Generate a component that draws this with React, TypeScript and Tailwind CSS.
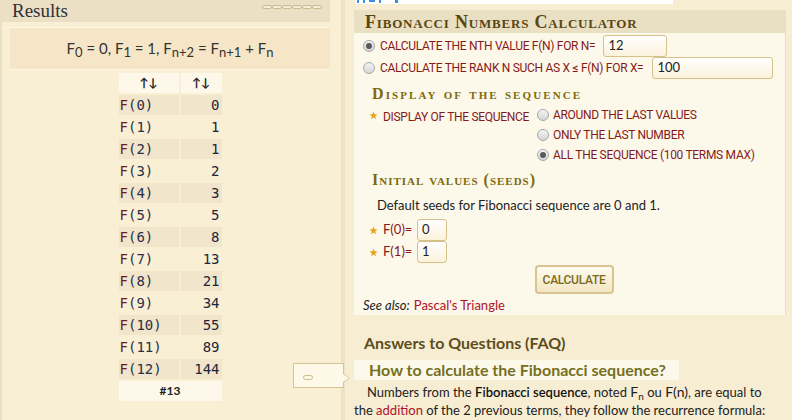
import React from "react";

const sans = { fontFamily: "Lato, 'DejaVu Sans', sans-serif" };
const caps = { fontFamily: "Roboto, 'DejaVu Sans', sans-serif", letterSpacing: "-0.3px" };
const serifCaps = { fontFamily: "'Liberation Serif', serif", fontVariant: "small-caps" as const };

function Radio({ checked }: { checked?: boolean }) {
  return (
    <span className="inline-flex w-[12px] h-[12px] rounded-full border border-[#a8a8a8] bg-gradient-to-b from-[#f4f4f4] to-[#d6d6d6] items-center justify-center shrink-0">
      {checked && <span className="w-[6px] h-[6px] rounded-full bg-[#5a5a5a]" />}
    </span>
  );
}

function Star() {
  return (
    <svg width="9" height="9" viewBox="0 0 10 10" className="shrink-0">
      <path d="M5 0.5 L6.2 3.7 L9.6 3.8 L6.9 5.9 L7.9 9.3 L5 7.3 L2.1 9.3 L3.1 5.9 L0.4 3.8 L3.8 3.7 Z" fill="#e8a317" />
    </svg>
  );
}

function Input({ value, w }: { value: string; w: string }) {
  return (
    <div className={`${w} h-[22px] rounded-[3px] border border-[#d6c08c] bg-gradient-to-b from-[#ffffff] to-[#fbf2db] flex items-center pl-[4px] text-[13px] text-[#222]`} style={sans}>
      {value}
    </div>
  );
}

const rows = [0, 1, 1, 2, 3, 5, 8, 13, 21, 34, 55, 89, 144];

export default function App() {
  return (
    <div className="relative w-[792px] h-[420px] overflow-hidden flex bg-[#f8efd5] text-[#333]">
      {/* left column */}
      <div className="w-[341px] shrink-0 flex">
        <div className="w-[2px] bg-[#ebdfc0]" />
        <div className="w-[328px] flex flex-col">
          <div className="h-[22px] bg-[#ebe0c4] flex items-center justify-between pl-[10px] pr-[8px]">
            <span className="text-[19px] leading-none text-[#2f2f3a] mt-[-2px]" style={{ fontFamily: "'Liberation Serif', serif" }}>
              Results
            </span>
            <div className="flex mt-[-8px]">
              {[0, 1, 2, 3, 4, 5].map((i) => (
                <span key={i} className="w-[10px] h-[4px] rounded-full border border-[#cdb98e] bg-[#f6edd6]" />
              ))}
            </div>
          </div>
          <div className="h-[5px]" />
          <div className="h-[1px] bg-[#fcf6e4]" />
          <div className="ml-[8px] h-[41px] bg-[#f6e6c7] flex items-center justify-center text-[15px] text-[#333]" style={sans}>
            <span className="leading-none">
              F<sub className="text-[13px]">0</sub> = 0, F<sub className="text-[13px]">1</sub> = 1, F
              <sub className="text-[13px]">n+2</sub> = F<sub className="text-[13px]">n+1</sub> + F<sub className="text-[13px]">n</sub>
            </span>
          </div>
          <div className="ml-[8px] h-[1px] bg-[#fdf8ea]" />
          <div className="ml-[8px] flex justify-center pt-[1px]">
            <table className="border-separate border-spacing-[2px] text-[14px]" style={{ fontFamily: "'DejaVu Sans Mono', monospace" }}>
              <thead>
                <tr>
                  <th className="w-[60px] h-[20px] bg-[#fdf8ea] p-0 text-[12px] font-bold text-[#222] leading-none" style={sans}>↑↓</th>
                  <th className="w-[41px] h-[20px] bg-[#fdf8ea] p-0 text-[12px] font-bold text-[#222] leading-none" style={sans}>↑↓</th>
                </tr>
              </thead>
              <tbody>
                {rows.map((v, i) => (
                  <tr key={i}>
                    <td className={`h-[20px] p-0 pl-[1px] leading-none ${i % 2 === 0 ? "bg-[#f1e5cb]" : ""}`}>
                      <span className="text-[#6a1e1e]">F</span>
                      <span className="text-[#2a2f4a]">({i})</span>
                    </td>
                    <td className={`h-[20px] p-0 pr-[2px] text-right leading-none text-[#22253a] ${i % 2 === 0 ? "bg-[#f1e5cb]" : ""}`}>{v}</td>
                  </tr>
                ))}
                <tr>
                  <td colSpan={2} className="h-[20px] p-0 bg-[#fdf8ea] text-center text-[12px] font-bold text-[#222] leading-none" style={sans}>
                    #13
                  </td>
                </tr>
              </tbody>
            </table>
          </div>
        </div>
      </div>

      {/* right column */}
      <div className="flex-1 border-l-[4px] border-[#efe2c2] bg-[#f7edd3] pl-[9px] flex flex-col" style={sans}>
        <div className="h-[4px] w-[318px] ml-[1px] bg-white overflow-hidden">
          <svg width="60" height="4" viewBox="0 0 60 4">
            <rect x="2" y="0" width="2" height="3" fill="#3a8ee6" />
            <rect x="8" y="0" width="2" height="3" fill="#3a8ee6" />
            <rect x="14" y="0" width="6" height="2" fill="#3a8ee6" />
            <rect x="24" y="0" width="2" height="3" fill="#3a8ee6" />
            <rect x="40" y="0" width="3" height="3" fill="#3a8ee6" />
          </svg>
        </div>
        <div className="h-[6px]" />
        <div className="w-[432px] border-r border-[#ecdfc0]">
          <div className="h-[23px] bg-[#e9dfc3] flex items-center pl-[11px]">
            <span className="text-[18px] font-bold text-[#5b4612] leading-none mt-[1px] tracking-[0.8px]" style={serifCaps}>
              Fibonacci Numbers Calculator
            </span>
          </div>
          <div className="bg-[#fcf8ea] pl-[9px] pt-[2px] pb-[2px] text-[12px] text-[#861a1a]">
            <div className="h-[22px] flex items-center">
              <Radio checked />
              <span className="ml-[5px] whitespace-nowrap" style={caps}>CALCULATE THE NTH VALUE F(N) FOR N=</span>
              <div className="ml-[8px]">
                <Input value="12" w="w-[64px]" />
              </div>
            </div>
            <div className="h-[22px] flex items-center">
              <Radio />
              <span className="ml-[5px] whitespace-nowrap" style={caps}>CALCULATE THE RANK N SUCH AS X ≤ F(N) FOR X=</span>
              <div className="ml-[9px]">
                <Input value="100" w="w-[121px]" />
              </div>
            </div>
            <div className="h-[7px]" />
            <div className="h-[16px] pl-[9px] flex items-center text-[16px] font-bold text-[#7d6a0c] leading-none tracking-[2.1px]" style={serifCaps}>
              Display of the sequence
            </div>
            <div className="h-[3px]" />
            <div className="flex">
              <div className="flex items-start pl-[6px] pt-[3px] w-[174px]">
                <span className="mt-[3px]"><Star /></span>
                <span className="ml-[5px] whitespace-nowrap" style={caps}>DISPLAY OF THE SEQUENCE</span>
              </div>
              <div className="flex flex-col">
                {[
                  ["AROUND THE LAST VALUES", false],
                  ["ONLY THE LAST NUMBER", false],
                  ["ALL THE SEQUENCE (100 TERMS MAX)", true],
                ].map(([t, c]) => (
                  <div key={t as string} className="h-[20px] flex items-center">
                    <Radio checked={c as boolean} />
                    <span className="ml-[4px] whitespace-nowrap" style={caps}>{t as string}</span>
                  </div>
                ))}
              </div>
            </div>
            <div className="h-[7px]" />
            <div className="h-[16px] pl-[9px] flex items-center text-[16px] font-bold text-[#7d6a0c] leading-none tracking-[1px]" style={serifCaps}>
              Initial values (seeds)
            </div>
            <div className="h-[10px]" />
            <div className="h-[16px] pl-[14px] flex items-center text-[13px] text-[#222]">Default seeds for Fibonacci sequence are 0 and 1.</div>
            <div className="h-[5px]" />
            {["0", "1"].map((v, i) => (
              <div key={i} className="h-[22px] flex items-center pl-[6px]">
                <Star />
                <span className="ml-[5px] w-[34px] text-[13px]">F({i})=</span>
                <Input value={v} w="w-[30px]" />
              </div>
            ))}
            <div className="h-[2px]" />
            <div className="flex justify-center">
              <div className="w-[79px] h-[29px] rounded-[4px] border-2 border-[#d8c391] bg-gradient-to-b from-[#fefbf0] to-[#f3e6c3] flex items-center justify-center text-[12px] text-[#7b6c1c] font-medium" style={caps}>
                CALCULATE
              </div>
            </div>
            <div className="h-[5px]" />
            <div className="h-[14px] flex items-center text-[13px] text-[#222]">
              <span className="italic">See also:</span>
              <span className="ml-[4px] text-[#b0102a]">Pascal's Triangle</span>
            </div>
          </div>
        </div>
        <div className="h-[20px]" />
        <div className="pl-[10px] text-[16px] font-bold text-[#5e4d20] leading-none">Answers to Questions (FAQ)</div>
        <div className="h-[9px]" />
        <div className="w-[325px] h-[20px] bg-[#fcf8ea] pl-[15px] flex items-center text-[16px] font-bold text-[#76701e]">
          How to calculate the Fibonacci sequence?
        </div>
        <div className="text-[13px] text-[#222] mt-[3px]">
          <div className="h-[18px] leading-[18px] pl-[13px] whitespace-nowrap">
            Numbers from the <span className="text-[#111] font-semibold">Fibonacci sequence</span>, noted{" "}
            <span className="text-[14px] leading-none">F</span>
            <sub className="text-[10px] leading-none">n</sub> ou <span className="text-[14px] leading-none">F(n)</span>, are equal to
          </div>
          <div className="h-[18px] leading-[18px] whitespace-nowrap">
            the <span className="text-[#b0102a]">addition</span> of the 2 previous terms, they follow the recurrence formula:
          </div>
        </div>
      </div>

      {/* tooltip overlay */}
      <div className="absolute left-[293px] top-[363px] w-[51px] h-[25px] bg-[#fdf8e8] border border-[#d7c496] flex items-center pl-[9px]">
        <span className="w-[10px] h-[5px] rounded-full border border-[#cdb98e] mt-[4px]" />
        <span className="absolute right-[-7px] top-[9px] w-0 h-0 border-y-[5px] border-y-transparent border-l-[7px] border-l-[#d7c496]" />
        <span className="absolute right-[-6px] top-[10px] w-0 h-0 border-y-[4px] border-y-transparent border-l-[6px] border-l-[#fdf8e8]" />
      </div>
    </div>
  );
}
